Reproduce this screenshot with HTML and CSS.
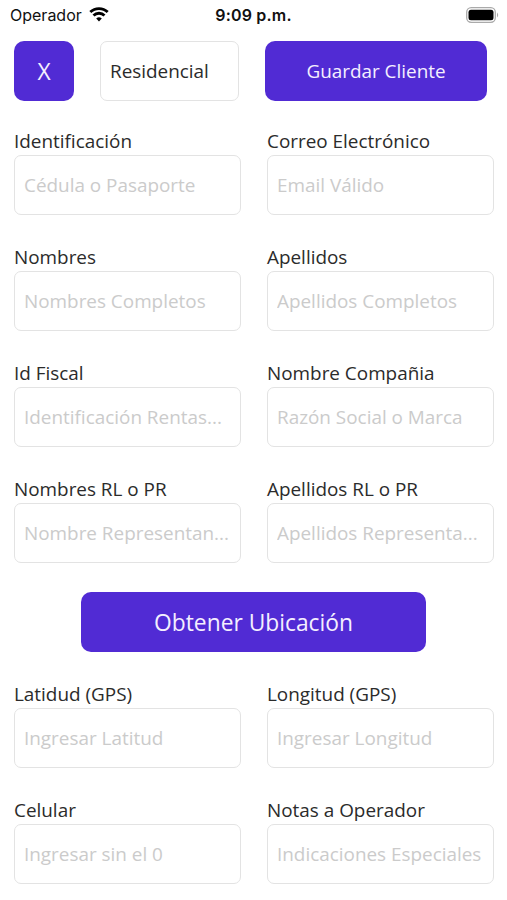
FILE: index.html
```html
<!DOCTYPE html>
<html lang="es">
<head>
    <meta charset="UTF-8">
    <meta name="viewport" content="width=device-width, initial-scale=1.0">
    <title>Nuevo Cliente</title>
    <link rel="stylesheet" href="styles.css">
</head>
<body>
    <header class="status-bar">
        <div class="carrier">
            <span>Operador</span>
            <svg class="wifi" viewBox="0 0 20 15" aria-hidden="true">
                <path d="M1.3 5.1a12.4 12.4 0 0 1 17.4 0"/>
                <path d="M4.5 8.5a7.8 7.8 0 0 1 11 0"/>
                <path class="dot" d="M10 14.5l-2.8-2.9a4.2 4.2 0 0 1 5.6 0z"/>
            </svg>
        </div>
        <span class="time">9:09 p.m.</span>
        <svg class="battery" viewBox="0 0 33 16" aria-hidden="true">
            <rect class="shell" x="0.7" y="0.7" width="28.6" height="14.6" rx="4.5"/>
            <rect x="2.5" y="2.7" width="25" height="10.6" rx="2.5"/>
            <path class="cap" d="M31 5.5q2.4 2.5 0 5z"/>
        </svg>
    </header>

    <form class="client-form">
        <div class="toolbar">
            <button type="button" class="close">X</button>
            <input type="text" class="client-type" value="Residencial" aria-label="Tipo de cliente">
            <button type="submit" class="save">Guardar Cliente</button>
        </div>

        <div class="fields">
            <div class="field">
                <label for="identificacion">Identificación</label>
                <input type="text" id="identificacion" placeholder="Cédula o Pasaporte">
            </div>
            <div class="field">
                <label for="correo">Correo Electrónico</label>
                <input type="email" id="correo" placeholder="Email Válido">
            </div>
            <div class="field">
                <label for="nombres">Nombres</label>
                <input type="text" id="nombres" placeholder="Nombres Completos">
            </div>
            <div class="field">
                <label for="apellidos">Apellidos</label>
                <input type="text" id="apellidos" placeholder="Apellidos Completos">
            </div>
            <div class="field">
                <label for="fiscal">Id Fiscal</label>
                <input type="text" id="fiscal" placeholder="Identificación Rentas...">
            </div>
            <div class="field">
                <label for="compania">Nombre Compañia</label>
                <input type="text" id="compania" placeholder="Razón Social o Marca">
            </div>
            <div class="field">
                <label for="nombres-rl">Nombres RL o PR</label>
                <input type="text" id="nombres-rl" placeholder="Nombre Representan...">
            </div>
            <div class="field">
                <label for="apellidos-rl">Apellidos RL o PR</label>
                <input type="text" id="apellidos-rl" placeholder="Apellidos Representa...">
            </div>
        </div>

        <button type="button" class="locate">Obtener Ubicación</button>

        <div class="fields">
            <div class="field">
                <label for="latitud">Latidud (GPS)</label>
                <input type="text" id="latitud" placeholder="Ingresar Latitud">
            </div>
            <div class="field">
                <label for="longitud">Longitud (GPS)</label>
                <input type="text" id="longitud" placeholder="Ingresar Longitud">
            </div>
            <div class="field">
                <label for="celular">Celular</label>
                <input type="tel" id="celular" placeholder="Ingresar sin el 0">
            </div>
            <div class="field">
                <label for="notas">Notas a Operador</label>
                <input type="text" id="notas" placeholder="Indicaciones Especiales">
            </div>
        </div>
    </form>
</body>
</html>
```
FILE: styles.css
```css
* {
    box-sizing: border-box;
}
body {
    margin: 0;
    height: 900px;
    overflow: hidden;
    background: #fff;
    color: #2b2b2b;
    font-family: "Open Sans", sans-serif;
    font-size: 18.9px;
}
.status-bar {
    display: grid;
    grid-template-columns: 1fr auto 1fr;
    align-items: center;
    height: 29px;
    padding: 0 8px 0 10px;
    color: #111;
    font-family: Inter, sans-serif;
    font-size: 16px;
}
.carrier {
    display: flex;
    align-items: center;
    gap: 7px;
}
.wifi {
    width: 20px;
    height: 15px;
    fill: none;
    stroke: #000;
    stroke-width: 2.8;
}
.wifi .dot {
    fill: #000;
    stroke: none;
}
.time {
    margin-right: 2px;
    font-weight: 600;
    letter-spacing: 0.2px;
}
.battery {
    justify-self: end;
    width: 33px;
    height: 16px;
}
.battery .shell {
    fill: none;
    stroke: #aaa;
    stroke-width: 1.3;
}
.battery .cap {
    fill: #aaa;
}
.client-form {
    padding: 12px 14px 0;
}
button, input {
    height: 60px;
    font: inherit;
}
button {
    padding: 0;
    border: none;
    border-radius: 10px;
    background: #512bd4;
    color: #f4efff;
}
input {
    width: 100%;
    padding: 0 9px;
    border: 1px solid #e3e3e3;
    border-radius: 7px;
    background: #fff;
    color: #2b2b2b;
}
input::placeholder {
    color: #cbcbcb;
    opacity: 1;
}
.toolbar {
    display: flex;
    margin-bottom: 28px;
}
.close {
    width: 60px;
    font-size: 22.8px;
}
.client-type {
    width: 139px;
    margin: 0 26px;
}
.save {
    width: 222px;
}
.fields {
    display: grid;
    grid-template-columns: 227px 227px;
    gap: 30px 26px;
}
.field label {
    display: block;
    height: 26px;
    line-height: 24px;
}
.locate {
    display: block;
    width: 345px;
    margin: 29px auto 30px;
    font-size: 22.8px;
}
```
